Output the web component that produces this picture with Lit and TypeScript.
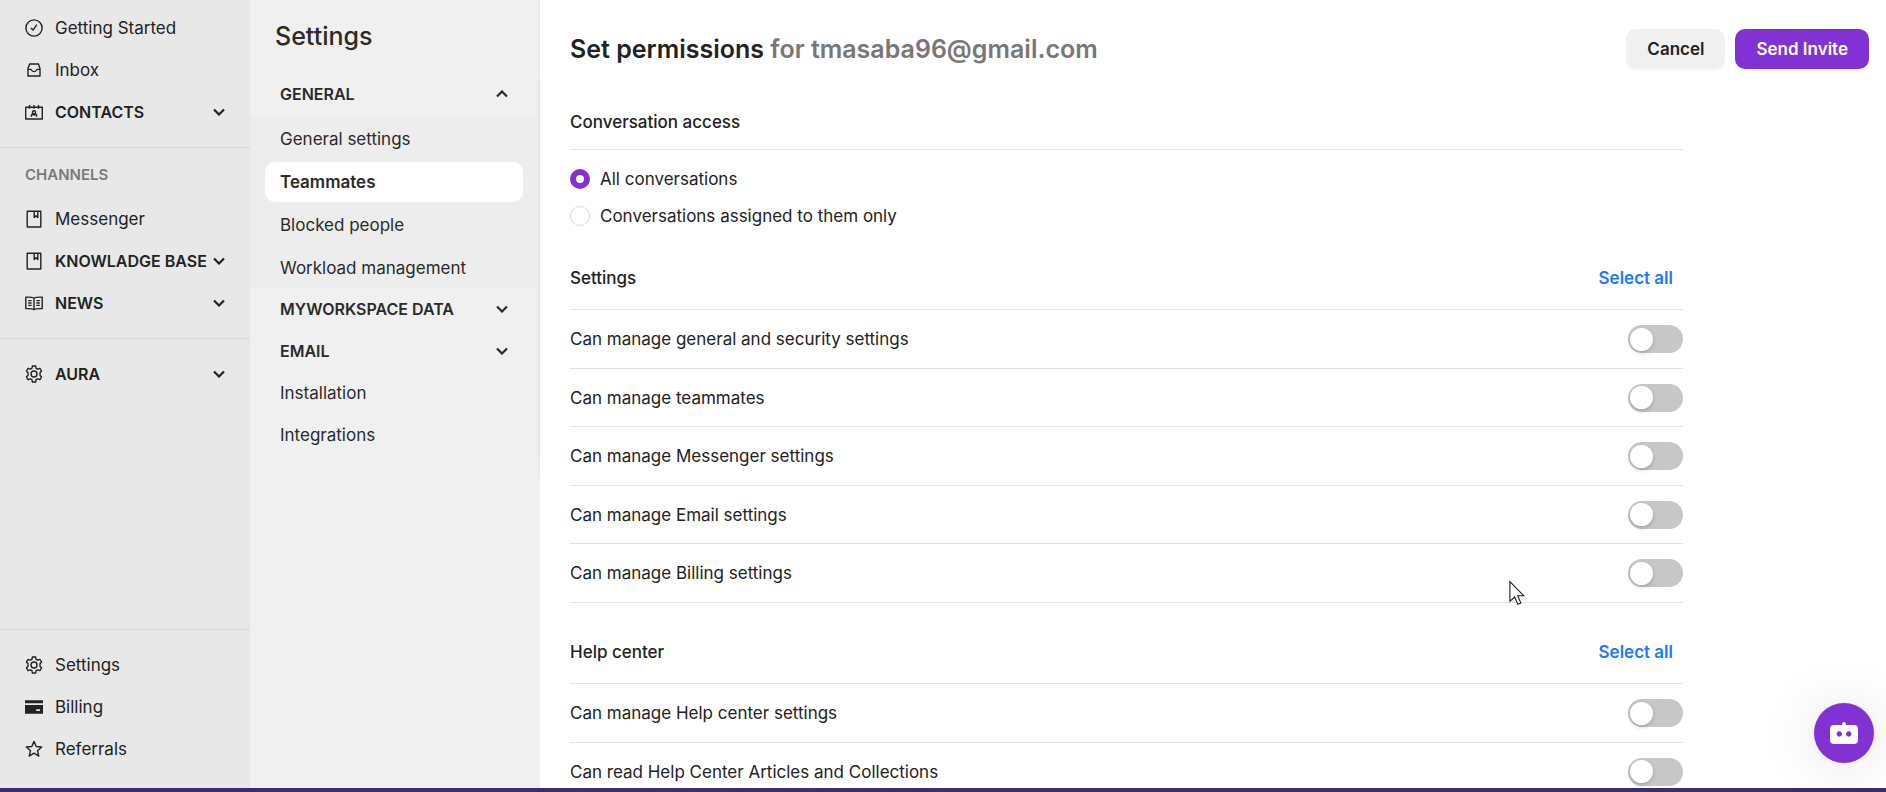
import { LitElement, html, css, svg, nothing } from "lit";
import { customElement, property } from "lit/decorators.js";
import { classMap } from "lit/directives/class-map.js";

const glyphs: Record<string, unknown> = {
  check: svg`<circle cx="9" cy="9" r="8.1"/><path d="M5.9 8.9 8.1 11.1 11.8 5.7"/>`,
  inbox: svg`<path d="M3 7.6V15H15V7.6L13.4 3H4.600Z M3 8.400H5.600C6.500 8.400 6.600 10.600 9 10.600S11.500 8.400 12.400 8.400H15"/>`,
  contacts: svg`<path d="M.7 4.200H17.300V16H.7Z M4.500 2V5.800 M9 2V5.800 M13.500 2V5.800"/><path d="M6.400 13.700V12L7.800 10.700 M11.600 13.700V12L10.200 10.700 M7.400 11.800H10.600"/><circle cx="9" cy="9.300" r="1.600"/>`,
  book: svg`<path d="M2.200 1.200H15.800V17H2.200Z M9.200 1.200V7.600L11.100 5.800 12.800 7.600V1.200"/>`,
  news: svg`<path d="M9 4.200C7.500 3 4.500 3.100 .8 3.200V14.600C4.500 14.500 7.500 14.500 9 15.600 10.500 14.500 13.500 14.500 17.200 14.600V3.200C13.500 3.100 10.500 3 9 4.200ZM9 4.200V15.600M3.200 6.600H6.600M3.200 9H6.600M3.200 11.400H6.600M11.400 6.600H14.800M11.400 9H14.800M11.400 11.400H14.800"/>`,
  gear: svg`<path d="M7.400 1H10.600L11.100 3.300 12.700 4.200 14.900 3.300 16.600 6 15 7.700V10.300L16.600 12 14.900 14.700 12.700 13.800 11.100 14.700 10.600 17H7.400L6.900 14.700 5.300 13.800 3.100 14.700 1.400 12 3 10.300V7.700L1.400 6 3.100 3.300 5.300 4.200 6.900 3.300Z"/><circle cx="9" cy="9" r="3"/>`,
  card: svg`<path class="solid" d="M0 2.200H18V5.300H0ZM0 7.100H18V15.800H0ZM11.200 11.300V12.900H15V11.300Z" fill-rule="evenodd"/>`,
  star: svg`<path d="M9 1.400 11.200 6.500 16.700 7 12.500 10.700 13.800 16.100 9 13.200 4.200 16.100 5.500 10.700 1.300 7 6.800 6.500Z"/>`,
};

const iconStyles = css`
  svg {
    display: block;
    flex: none;
    fill: none;
    stroke: currentColor;
  }
  .icon {
    width: 18px;
    height: 18px;
    stroke-width: 1.4;
    stroke-linejoin: round;
  }
  .solid {
    fill: currentColor;
    stroke: none;
  }
  .chevron {
    width: 12px;
    height: 8px;
    stroke-width: 2.2;
  }
`;

const icon = (name: string) =>
  html`<svg class="icon" viewBox="0 0 18 18" aria-hidden="true">${glyphs[name]}</svg>`;

const chevron = (up = false) => html`<svg class="chevron" viewBox="0 0 12 8" aria-hidden="true">
  <path d=${up ? "M1 6.500 6 1.500 11 6.500" : "M1 1.500 6 6.500 11 1.500"} />
</svg>`;

interface NavItem {
  label: string;
  icon?: string;
  group?: boolean;
  active?: boolean;
}

@customElement("main-sidebar")
class MainSidebar extends LitElement {
  static styles = [
    iconStyles,
    css`
      :host {
        display: flex;
        flex-direction: column;
        justify-content: space-between;
        background: #e8e8e8;
        color: #222;
      }
      .section {
        display: flex;
        flex-direction: column;
        padding: 14px 25px;
      }
      .section + .section,
      .bottom {
        border-top: 1px solid #d8d8d8;
      }
      .top .section:first-child {
        padding-top: 7px;
      }
      .bottom .section {
        padding-bottom: 18px;
      }
      .caption {
        margin: 0 0 10px;
        font-size: 15px;
        font-weight: 600;
        line-height: 26px;
        color: #7a7a7a;
      }
      .item {
        display: flex;
        align-items: center;
        height: 42px;
        padding: 0;
        border: 0;
        background: none;
        color: inherit;
        font: inherit;
        line-height: 20px;
        text-align: left;
        text-decoration: none;
        white-space: nowrap;
        cursor: pointer;
      }
      .group {
        font-size: 16px;
        font-weight: 600;
      }
      .label {
        flex: 1;
        padding-left: 12px;
      }
    `,
  ];

  private item(entry: NavItem) {
    const body = html`${icon(entry.icon!)}<span class="label">${entry.label}</span>`;
    return entry.group
      ? html`<button class="item group" type="button" aria-expanded="false">${body}${chevron()}</button>`
      : html`<a class="item" href="#">${body}</a>`;
  }

  private section(items: NavItem[], caption?: string) {
    return html`<div class="section">
      ${caption ? html`<h2 class="caption">${caption}</h2>` : nothing}
      ${items.map((entry) => this.item(entry))}
    </div>`;
  }

  render() {
    return html`
      <nav class="top" aria-label="Main">
        ${this.section([
          { label: "Getting Started", icon: "check" },
          { label: "Inbox", icon: "inbox" },
          { label: "CONTACTS", icon: "contacts", group: true },
        ])}
        ${this.section(
          [
            { label: "Messenger", icon: "book" },
            { label: "KNOWLADGE BASE", icon: "book", group: true },
            { label: "NEWS", icon: "news", group: true },
          ],
          "CHANNELS",
        )}
        ${this.section([{ label: "AURA", icon: "gear", group: true }])}
      </nav>
      <nav class="bottom" aria-label="Account">
        ${this.section([
          { label: "Settings", icon: "gear" },
          { label: "Billing", icon: "card" },
          { label: "Referrals", icon: "star" },
        ])}
      </nav>
    `;
  }
}

@customElement("settings-menu")
class SettingsMenu extends LitElement {
  static styles = [
    iconStyles,
    css`
      :host {
        display: block;
        background: #f0f0f0;
        color: #2a2a2a;
      }
      .frame {
        padding-bottom: 20px;
        border-right: 1px solid #e6e6e6;
      }
      .title {
        margin: 0;
        padding: 19px 25px 21px;
        font-size: 25px;
        font-weight: 500;
        line-height: 34px;
      }
      .menu {
        display: flex;
        flex-direction: column;
        border-right: 1px solid #e6e6e6;
      }
      .item {
        display: flex;
        align-items: center;
        justify-content: space-between;
        box-sizing: border-box;
        height: 42px;
        padding: 0 30px;
        border: 0;
        background: none;
        color: inherit;
        font: inherit;
        text-decoration: none;
        cursor: pointer;
      }
      .group {
        font-size: 16px;
        font-weight: 600;
      }
      .open {
        height: 40px;
        margin-bottom: 3px;
      }
      .submenu {
        display: flex;
        flex-direction: column;
        gap: 3px;
        padding: 2px 15px 0;
        background: #ededed;
      }
      .submenu .item {
        height: 40px;
        padding: 0 15px;
        border-radius: 10px;
      }
      .submenu .active {
        background: #fff;
        font-weight: 600;
      }
    `,
  ];

  private link(entry: NavItem) {
    return html`<a class=${classMap({ item: true, active: !!entry.active })} href="#">${entry.label}</a>`;
  }

  render() {
    return html`
      <div class="frame">
        <h2 class="title">Settings</h2>
        <nav class="menu" aria-label="Settings">
          <button class="item group open" type="button" aria-expanded="true">GENERAL ${chevron(true)}</button>
          <div class="submenu">
            ${[
              { label: "General settings" },
              { label: "Teammates", active: true },
              { label: "Blocked people" },
              { label: "Workload management" },
            ].map((entry) => this.link(entry))}
          </div>
          <button class="item group" type="button" aria-expanded="false">MYWORKSPACE DATA ${chevron()}</button>
          <button class="item group" type="button" aria-expanded="false">EMAIL ${chevron()}</button>
          ${this.link({ label: "Installation" })} ${this.link({ label: "Integrations" })}
        </nav>
      </div>
    `;
  }
}

@customElement("permission-group")
class PermissionGroup extends LitElement {
  @property() heading = "";
  @property({ attribute: false }) permissions: string[] = [];

  static styles = css`
    :host {
      display: block;
    }
    .header {
      display: flex;
      align-items: center;
      justify-content: space-between;
      height: 81px;
      padding-top: 17px;
      box-sizing: border-box;
      border-bottom: 1px solid #e3e3e3;
    }
    .heading {
      margin: 0;
      font-size: 17px;
      font-weight: 500;
      line-height: 26px;
    }
    .select-all {
      padding: 8px 10px;
      border: 0;
      background: none;
      color: #1a79ff;
      font: inherit;
      font-weight: 600;
      line-height: 20px;
      cursor: pointer;
    }
    .row {
      display: flex;
      align-items: center;
      justify-content: space-between;
      box-sizing: border-box;
      height: 59px;
      border-bottom: 1px solid #e3e3e3;
      cursor: pointer;
    }
    .row:nth-of-type(even) {
      height: 58px;
    }
    .toggle {
      display: flex;
      align-items: center;
      appearance: none;
      box-sizing: border-box;
      width: 55px;
      height: 28px;
      margin: 0;
      padding: 0 2px;
      border-radius: 14px;
      background: #c7c7c7;
      cursor: pointer;
    }
    .toggle::before {
      content: "";
      width: 23px;
      height: 23px;
      border-radius: 50%;
      background: #fff;
      box-shadow: 0 2px 4px rgba(0, 35, 11, 0.2);
    }
    .toggle:checked {
      justify-content: flex-end;
      background: #8232d2;
    }
  `;

  private toggleAll() {
    this.renderRoot
      .querySelectorAll<HTMLInputElement>(".toggle")
      .forEach((box) => (box.checked = true));
  }

  render() {
    return html`
      <header class="header">
        <h2 class="heading">${this.heading}</h2>
        <button class="select-all" type="button" @click=${this.toggleAll}>Select all</button>
      </header>
      <div class="rows">
        ${this.permissions.map(
          (name) => html`<label class="row">
            <span>${name}</span>
            <input class="toggle" type="checkbox" role="switch" />
          </label>`,
        )}
      </div>
    `;
  }
}

@customElement("app-root")
class AppRoot extends LitElement {
  static styles = css`
    :host {
      display: grid;
      grid-template-columns: 250px 290px minmax(0, 1fr);
      grid-template-rows: minmax(0, 1fr) 4px;
      height: 100vh;
      overflow: hidden;
      background: #fff;
      color: #222;
      font-family: Inter, "Liberation Sans", sans-serif;
      font-size: 17px;
      line-height: 20px;
    }
    .content {
      overflow: hidden;
      padding: 29px 17px 0 30px;
    }
    .page-header {
      display: flex;
      align-items: center;
      justify-content: space-between;
    }
    .title {
      margin: 0;
      font-size: 25px;
      font-weight: 600;
      line-height: 40px;
    }
    .recipient {
      color: #777;
    }
    .actions {
      display: flex;
      gap: 10px;
    }
    .button {
      height: 40px;
      padding: 0 21px;
      border: 0;
      border-radius: 10px;
      background: #f0f0f0;
      color: #222;
      font: inherit;
      font-weight: 600;
      box-shadow: 0 2px 2px rgba(0, 0, 0, 0.03);
      cursor: pointer;
    }
    .primary {
      background: #8232d2;
      color: #fff;
    }
    .form {
      margin-right: 186px;
      padding-top: 40px;
    }
    .access {
      margin: 0;
      padding: 0;
      border: 0;
    }
    .legend {
      box-sizing: border-box;
      width: 100%;
      padding: 0 0 14px;
      border-bottom: 1px solid #e3e3e3;
      font-weight: 500;
      line-height: 26px;
    }
    .options {
      display: grid;
      gap: 11px;
      padding-top: 16px;
    }
    .option {
      display: flex;
      align-items: center;
      gap: 10px;
      line-height: 26px;
      cursor: pointer;
    }
    .radio {
      appearance: none;
      box-sizing: border-box;
      width: 20px;
      height: 20px;
      margin: 0;
      border: 1px solid #dcdcdc;
      border-radius: 50%;
      background: #fff;
    }
    .radio:checked {
      border: 6px solid #8232d2;
    }
    .strip {
      grid-column: 1 / -1;
      background: #3f2b70;
    }
    .assistant {
      position: absolute;
      right: 12px;
      bottom: 29px;
      display: grid;
      place-items: center;
      width: 60px;
      height: 60px;
      padding: 0;
      border: 0;
      border-radius: 50%;
      background: #8232d2;
      box-shadow: 0 1px 6px rgba(0, 0, 0, 0.06), 0 2px 60px rgba(0, 0, 0, 0.12);
      cursor: pointer;
    }
    .bot {
      width: 28px;
      height: 24px;
    }
    .pointer {
      position: absolute;
      left: 80%;
      top: 580px;
      width: 16px;
      height: 25px;
      pointer-events: none;
    }
  `;

  render() {
    return html`
      <main-sidebar></main-sidebar>
      <settings-menu></settings-menu>
      <main class="content">
        <header class="page-header">
          <h1 class="title">Set permissions <span class="recipient">for tmasaba96@gmail.com</span></h1>
          <div class="actions">
            <button class="button" type="button">Cancel</button>
            <button class="button primary" type="submit" form="permissions">Send Invite</button>
          </div>
        </header>
        <form class="form" id="permissions">
          <fieldset class="access">
            <legend class="legend">Conversation access</legend>
            <div class="options">
              <label class="option">
                <input class="radio" type="radio" name="access" value="all" checked />
                All conversations
              </label>
              <label class="option">
                <input class="radio" type="radio" name="access" value="assigned" />
                Conversations assigned to them only
              </label>
            </div>
          </fieldset>
          <permission-group
            heading="Settings"
            .permissions=${[
              "Can manage general and security settings",
              "Can manage teammates",
              "Can manage Messenger settings",
              "Can manage Email settings",
              "Can manage Billing settings",
            ]}
          ></permission-group>
          <permission-group
            heading="Help center"
            .permissions=${["Can manage Help center settings", "Can read Help Center Articles and Collections"]}
          ></permission-group>
        </form>
      </main>
      <div class="strip"></div>
      <button class="assistant" type="button" aria-label="Open assistant">
        <svg class="bot" viewBox="0 0 28 24" aria-hidden="true">
          <path
            fill="#fff"
            fill-rule="evenodd"
            d="M12.200 4V2.800a1.800 1.800 0 0 1 3.600 0V4H24a4 4 0 0 1 4 4V19a4 4 0 0 1-4 4H4a4 4 0 0 1-4-4V8a4 4 0 0 1 4-4ZM9.300 10.300a2.700 2.700 0 1 0 .01 0ZM18.700 10.300a2.700 2.700 0 1 0 .01 0Z"
          />
        </svg>
      </button>
      <svg class="pointer" viewBox="0 0 16 25" aria-hidden="true">
        <path
          fill="#fff"
          stroke="#1b1b2a"
          stroke-width="1.100"
          d="M.9 1.500V21.300L5.600 17 8.900 24.200 11.800 22.900 8.700 15.800H14.900Z"
        />
      </svg>
    `;
  }
}
